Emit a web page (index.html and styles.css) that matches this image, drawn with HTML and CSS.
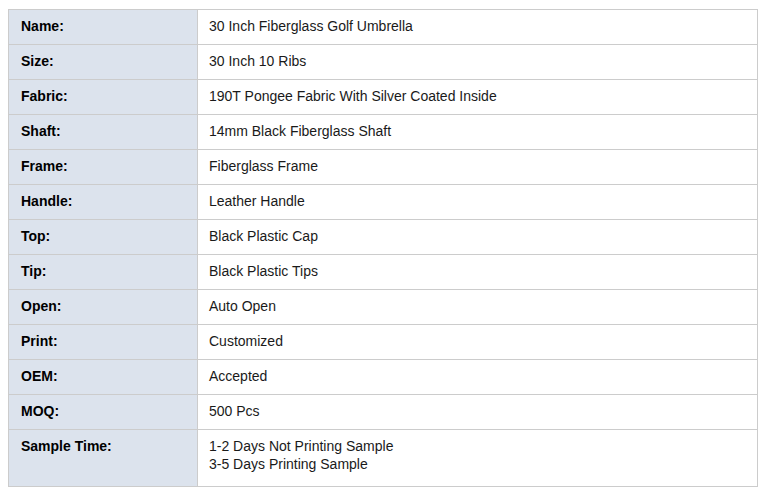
FILE: index.html
```html
<!DOCTYPE html>
<html>
<head>
<meta charset="utf-8">
<link rel="stylesheet" href="styles.css">
</head>
<body>
<table class="spec">
<tr><th>Name:</th><td>30 Inch Fiberglass Golf Umbrella</td></tr>
<tr><th>Size:</th><td>30 Inch 10 Ribs</td></tr>
<tr><th>Fabric:</th><td>190T Pongee Fabric With Silver Coated Inside</td></tr>
<tr><th>Shaft:</th><td>14mm Black Fiberglass Shaft</td></tr>
<tr><th>Frame:</th><td>Fiberglass Frame</td></tr>
<tr><th>Handle:</th><td>Leather Handle</td></tr>
<tr><th>Top:</th><td>Black Plastic Cap</td></tr>
<tr><th>Tip:</th><td>Black Plastic Tips</td></tr>
<tr><th>Open:</th><td>Auto Open</td></tr>
<tr><th>Print:</th><td>Customized</td></tr>
<tr><th>OEM:</th><td>Accepted</td></tr>
<tr><th>MOQ:</th><td>500 Pcs</td></tr>
<tr class="last"><th>Sample Time:</th><td>1-2 Days Not Printing Sample<br>3-5 Days Printing Sample</td></tr>
</table>
</body>
</html>
```
FILE: styles.css
```css
html, body {
  margin: 0;
  padding: 0;
  background: #ffffff;
}
body {
  padding: 9px 9px 0 8px;
  font-family: "Liberation Sans", Arial, sans-serif;
  font-size: 14px;
  color: #111111;
}
.spec {
  width: 750px;
  border-collapse: collapse;
  table-layout: fixed;
}
.spec th, .spec td {
  border: 1px solid #cccccc;
  padding: 7px 12px 9px 12px;
  line-height: 18px;
  height: 18px;
  text-align: left;
  vertical-align: top;
}
.spec th {
  width: 164px;
  background: #dce3ed;
  font-weight: bold;
  color: #000000;
}
.spec td {
  padding-left: 11px;
  color: #1a1a1a;
}
.spec .last th, .spec .last td {
  padding-bottom: 13px;
}
```
